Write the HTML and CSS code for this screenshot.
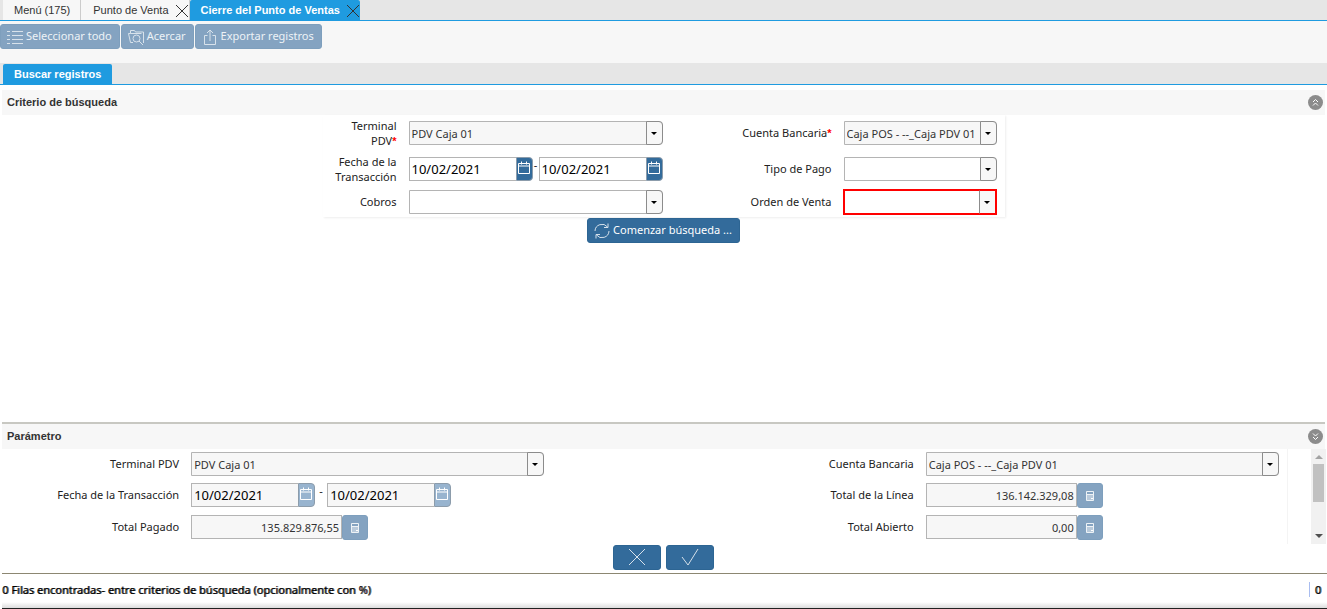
FILE: index.html
```
<!DOCTYPE html>
<html lang="es">
<head>
    <meta charset="UTF-8">
    <meta name="viewport" content="width=device-width, initial-scale=1.0">
    <title>Cierre del Punto de Ventas</title>
    <link rel="stylesheet" href="styles.css">
</head>
<body>
    <!-- Shared icons -->
    <svg class="icon-defs" width="0" height="0">
        <symbol id="calendar" viewBox="0 0 14 14">
            <path d="M1.5 2.5h11v10h-11zM1.5 5h11M4.5 0.5v3M9.5 0.5v3" fill="none" stroke="currentColor"/>
        </symbol>
        <symbol id="calc" viewBox="0 0 10 12">
            <path d="M1.5 1.5h7v9h-7z" fill="currentColor" fill-opacity="0.5" stroke="currentColor"/>
            <path d="M2 2h6v2h-6z" fill="#84a3c1"/>
            <path d="M2 4.5h6" stroke="currentColor" fill="none"/>
            <path d="M6 8.5h2" stroke="#fff" fill="none"/>
        </symbol>
        <symbol id="cross" viewBox="0 0 14 14">
            <path d="M1 1l12 12M13 1L1 13" fill="none" stroke="currentColor"/>
        </symbol>
    </svg>

    <!-- Window tabs -->
    <nav class="tabs">
        <a href="#" class="tab">Menú (175)</a>
        <a href="#" class="tab closable">Punto de Venta <svg class="close"><use href="#cross"/></svg></a>
        <a href="#" class="tab closable active">Cierre del Punto de Ventas <svg class="close"><use href="#cross"/></svg></a>
    </nav>

    <!-- Toolbar -->
    <div class="toolbar">
        <button type="button" class="btn" disabled>
            <svg class="icon" viewBox="0 0 16 16"><path d="M0 2.5h3M0 6.5h3M0 10.5h3M0 14.5h3M5 2.5h11M5 6.5h11M5 10.5h11M5 14.5h11" fill="none" stroke="currentColor"/></svg>
            Seleccionar todo
        </button>
        <button type="button" class="btn" disabled>
            <svg class="icon" viewBox="0 0 16 16"><path d="M5 13.5H2.5L0.5 4.5h2v-3h4l1 1.5h8v11M2.5 4.5h11" fill="none" stroke="currentColor"/><circle cx="8.5" cy="9.5" r="3.5" fill="none" stroke="currentColor"/><path d="M11 12l4 4" stroke="currentColor"/></svg>
            Acercar
        </button>
        <button type="button" class="btn" disabled>
            <svg class="icon" viewBox="0 0 16 16"><path d="M5.5 6.5h-3v9h11v-9h-3M8 12V1M5 4l3-3 3 3" fill="none" stroke="currentColor"/></svg>
            Exportar registros
        </button>
    </div>

    <!-- Inner tabs -->
    <nav class="tabs inner-tabs">
        <a href="#" class="tab active">Buscar registros</a>
    </nav>

    <!-- Search criteria -->
    <section class="criteria">
        <div class="section-header">
            <h2>Criterio de búsqueda</h2>
            <button type="button" class="toggle" aria-label="Contraer">
                <svg viewBox="0 0 15 15"><path d="M5 7l2.5-2.5L10 7M5 10.5L7.5 8l2.5 2.5" fill="none" stroke="currentColor"/></svg>
            </button>
        </div>
        <form class="form search-form">
            <label for="terminal">Terminal<br>PDV<b class="req">*</b></label>
            <div class="combo"><select id="terminal" class="readonly"><option>PDV Caja 01</option></select></div>
            <label for="cuenta">Cuenta Bancaria<b class="req">*</b></label>
            <div class="combo"><select id="cuenta" class="readonly"><option>Caja POS - --_Caja PDV 01</option></select></div>

            <label for="fecha">Fecha de la Transacción</label>
            <div class="range">
                <div class="date">
                    <input type="text" id="fecha" value="10/02/2021">
                    <button type="button" aria-label="Calendario"><svg><use href="#calendar"/></svg></button>
                </div>
                <span class="dash">-</span>
                <div class="date">
                    <input type="text" aria-label="Fecha hasta" value="10/02/2021">
                    <button type="button" aria-label="Calendario"><svg><use href="#calendar"/></svg></button>
                </div>
            </div>
            <label for="tipo">Tipo de Pago</label>
            <div class="combo"><select id="tipo"><option></option></select></div>

            <label for="cobros">Cobros</label>
            <div class="combo"><select id="cobros"><option></option></select></div>
            <label for="orden">Orden de Venta</label>
            <div class="combo invalid"><select id="orden"><option></option></select></div>
        </form>
        <div class="actions">
            <button type="button" class="btn">
                <svg class="icon" viewBox="0 0 16 16"><path d="M1 8a7 7 0 0 1 12.5-4M15 8a7 7 0 0 1-12.5 4M14 0.5V4.5h-4M2 15.5V11.5h4" fill="none" stroke="currentColor"/></svg>
                Comenzar búsqueda ...
            </button>
        </div>
    </section>

    <!-- Parameters -->
    <section class="params">
        <div class="section-header">
            <h2>Parámetro</h2>
            <button type="button" class="toggle" aria-label="Expandir">
                <svg viewBox="0 0 15 15"><path d="M5 4.5L7.5 7 10 4.5M5 8l2.5 2.5L10 8" fill="none" stroke="currentColor"/></svg>
            </button>
        </div>
        <div class="scroll-area">
            <form class="form param-form">
                <label for="p-terminal">Terminal PDV</label>
                <div class="combo"><select id="p-terminal" class="readonly"><option>PDV Caja 01</option></select></div>
                <label for="p-cuenta">Cuenta Bancaria</label>
                <div class="combo"><select id="p-cuenta" class="readonly"><option>Caja POS - --_Caja PDV 01</option></select></div>

                <label for="p-fecha">Fecha de la Transacción</label>
                <div class="range wide">
                    <div class="date">
                        <input type="text" id="p-fecha" class="readonly" value="10/02/2021" readonly>
                        <button type="button" aria-label="Calendario" disabled><svg><use href="#calendar"/></svg></button>
                    </div>
                    <span class="dash">-</span>
                    <div class="date">
                        <input type="text" class="readonly" aria-label="Fecha hasta" value="10/02/2021" readonly>
                        <button type="button" aria-label="Calendario" disabled><svg><use href="#calendar"/></svg></button>
                    </div>
                </div>
                <label for="linea">Total de la Línea</label>
                <div class="number">
                    <input type="text" id="linea" class="readonly" value="136.142.329,08" readonly>
                    <button type="button" aria-label="Calculadora" disabled><svg><use href="#calc"/></svg></button>
                </div>

                <label for="pagado">Total Pagado</label>
                <div class="number">
                    <input type="text" id="pagado" class="readonly" value="135.829.876,55" readonly>
                    <button type="button" aria-label="Calculadora" disabled><svg><use href="#calc"/></svg></button>
                </div>
                <label for="abierto">Total Abierto</label>
                <div class="number">
                    <input type="text" id="abierto" class="readonly" value="0,00" readonly>
                    <button type="button" aria-label="Calculadora" disabled><svg><use href="#calc"/></svg></button>
                </div>
            </form>
            <div class="scrollbar">
                <span class="arrow up"></span>
                <span class="thumb"></span>
                <span class="arrow down"></span>
            </div>
        </div>
        <div class="actions">
            <button type="button" class="btn btn-icon" aria-label="Cancelar">
                <svg viewBox="0 0 18 18"><path d="M1 1l16 16M17 1L1 17" fill="none" stroke="currentColor"/></svg>
            </button>
            <button type="button" class="btn btn-icon" aria-label="Aceptar">
                <svg viewBox="0 0 18 18"><path d="M1 9l6 8L17 1" fill="none" stroke="currentColor"/></svg>
            </button>
        </div>
    </section>

    <!-- Status bar -->
    <footer class="status">
        <span>0 Filas encontradas- entre criterios de búsqueda (opcionalmente con %)</span>
        <span class="count">0</span>
    </footer>
</body>
</html>
```
FILE: styles.css
```
*,
*::before,
*::after {
    margin: 0;
    padding: 0;
    box-sizing: border-box;
}

body {
    display: flex;
    flex-direction: column;
    min-height: 100vh;
    font-family: "Noto Sans", "Open Sans", sans-serif;
    font-size: 11px;
    line-height: 15px;
    color: #222;
    background-color: #fff;
}

.icon-defs {
    position: absolute;
}

button,
input,
select {
    font: inherit;
}

/* Tabs */
.tabs {
    display: flex;
    height: 21px;
    padding-left: 3px;
    background-color: #e6e6e6;
    border-bottom: 1px solid #1f9be0;
    font-family: "Liberation Sans", Arial, sans-serif;
}

.tab {
    display: flex;
    align-items: center;
    padding: 0 10px 0 11px;
    color: #333;
    background-color: #f7f7f7;
    border-right: 1px solid #ccc;
    text-decoration: none;
    white-space: nowrap;
}

.tab.closable {
    padding: 0 0 0 12px;
}

.tab.active {
    padding-left: 11px;
    color: #fff;
    background-color: #1f9be0;
    border-right: none;
    border-radius: 2px 2px 0 0;
    font-weight: bold;
}

.close {
    width: 14px;
    height: 14px;
    margin: 2px 0 0 6px;
    color: #333;
}

.inner-tabs {
    height: 22px;
    padding-top: 1px;
}

.inner-tabs .tab.active {
    padding: 0 11px;
}

/* Toolbar */
.toolbar {
    display: flex;
    gap: 1px;
    height: 42px;
    padding-top: 3px;
    background-color: #f7f7f7;
}

.btn {
    display: flex;
    align-items: center;
    gap: 3px;
    height: 25px;
    padding: 0 7px 2px 6px;
    color: #fff;
    background-color: #336b9b;
    border: 1px solid #2d6593;
    border-radius: 3px;
    white-space: nowrap;
}

.btn:disabled {
    color: #edf2f6;
    background-color: #84a3c1;
    border-color: #7e9fbd;
}

.icon {
    width: 16px;
    height: 16px;
    margin-top: 2px;
    opacity: 0.8;
}

/* Section headers */
.section-header {
    display: flex;
    align-items: center;
    justify-content: space-between;
    height: 25px;
    margin: 0 2px;
    padding: 0 2px 0 5px;
    background-color: #f7f7f7;
}

.section-header h2 {
    font-family: "Liberation Sans", Arial, sans-serif;
    font-size: 11px;
    color: #333;
}

.toggle {
    width: 15px;
    height: 15px;
    color: #fff;
    background-color: #8c8c8c;
    border: none;
    border-radius: 50%;
}

.toggle svg {
    display: block;
}

.criteria {
    flex: 1;
    padding-top: 5px;
}

/* Forms */
.form {
    display: grid;
    align-items: center;
    column-gap: 12px;
}

.form label {
    padding-bottom: 1px;
    text-align: right;
}

.search-form {
    grid-template-columns: 74px 254px 157px 153px;
    grid-template-rows: 30px 30px 24px;
    row-gap: 6px;
    width: fit-content;
    margin: 0 auto;
    padding: 3px 8px 3px 0;
    box-shadow: 1px 1px 2px #eee;
}

.req {
    color: #f00;
    font-family: "Liberation Sans", Arial, sans-serif;
    line-height: 1;
}

input,
select {
    width: 100%;
    height: 24px;
    padding: 0 2px;
    color: #333;
    background-color: #fff;
    border: 1px solid #b4b4b4;
    border-radius: 0;
}

.readonly {
    background-color: #f7f7f7;
}

.combo {
    position: relative;
}

.combo select {
    display: block;
    appearance: none;
    border-radius: 0 4px 4px 0;
}

/* drop-down button over the right end of the select */
.combo::before {
    content: "";
    position: absolute;
    top: 0;
    right: 0;
    width: 17px;
    height: 24px;
    background-color: #f7f7f7;
    border: 1px solid #8c8c8c;
    border-radius: 0 4px 4px 0;
    pointer-events: none;
}

.combo::after {
    content: "";
    position: absolute;
    top: 11px;
    right: 6px;
    border: 3px solid transparent;
    border-top-color: #000;
    border-bottom: none;
    pointer-events: none;
}

.combo.invalid {
    margin-right: 1px;
    outline: 1px solid #f00;
}

.combo.invalid select {
    border-color: #f00;
    border-radius: 0;
}

.combo.invalid::before {
    border-color: #f00;
    border-left-color: #8c8c8c;
    border-radius: 0;
}

.range {
    display: flex;
}

.date {
    display: flex;
    width: 124px;
}

.date input {
    flex: 1;
    min-width: 0;
    color: #000;
    font-size: 13px;
    border-right: none;
}

.date button {
    width: 17px;
    height: 24px;
    color: #fff;
    background-color: #336b9b;
    border: 1px solid #8c9cab;
    border-radius: 0 4px 4px 0;
}

.date button:disabled {
    background-color: #98b4cf;
}

.date svg {
    display: block;
    width: 14px;
    height: 14px;
    margin-bottom: 3px;
}

.dash {
    width: 6px;
    text-align: center;
}

.wide .dash {
    width: 12px;
}

.number {
    display: flex;
}

.number input {
    width: 151px;
    text-align: right;
}

.number button {
    display: flex;
    align-items: center;
    justify-content: center;
    width: 26px;
    height: 25px;
    color: #edf2f6;
    background-color: #84a3c1;
    border: 1px solid #7e9fbd;
    border-radius: 3px;
}

.number svg {
    width: 10px;
    height: 12px;
}

.actions {
    display: flex;
    justify-content: center;
    gap: 5px;
    padding-top: 1px;
}

/* Parameters */
.params {
    padding-bottom: 3px;
}

.params .section-header {
    height: 27px;
    border-top: 2px solid #c8c8c2;
}

.scroll-area {
    display: flex;
    justify-content: space-between;
    height: 95px;
    margin: 0 1px 0 2px;
    overflow: hidden;
}

.param-form {
    flex: 1;
    grid-template-columns: 177fr 353fr 357fr 353fr;
    grid-template-rows: 24px 25px 25px;
    align-items: start;
    align-content: start;
    row-gap: 7px;
    margin-right: 23px;
    padding: 3px 8px 0 0;
    border-right: 1px solid #f4f4f4;
}

.param-form label {
    padding-top: 4px;
}

.scrollbar {
    display: flex;
    flex-direction: column;
    align-items: center;
    width: 15px;
    padding: 6px 0;
    background-color: #f1f1f1;
}

.arrow {
    border: 4px solid transparent;
}

.arrow.up {
    border-top: none;
    border-bottom-color: #a3a3a3;
}

.arrow.down {
    margin-top: auto;
    border-bottom: none;
    border-top-color: #505050;
}

.thumb {
    width: 11px;
    height: 38px;
    margin-top: 5px;
    background-color: #c1c1c1;
}

.btn-icon {
    justify-content: center;
    width: 48px;
    padding: 0 0 1px;
}

.btn-icon svg {
    width: 18px;
    height: 18px;
    opacity: 0.8;
}

/* Status bar */
.status {
    display: flex;
    align-items: center;
    justify-content: space-between;
    height: 36px;
    margin-left: 2px;
    padding: 0 6px 3px 0;
    color: #000;
    border-top: 1px solid #8c8772;
    border-bottom: 1px solid #222;
    background: linear-gradient(#fff 28px, #ddd 34px);
    text-shadow: 1px 0 0 rgba(0, 0, 0, 0.7);
}

.count {
    padding-left: 5px;
    border-left: 1px solid #a9bdf0;
}
```
